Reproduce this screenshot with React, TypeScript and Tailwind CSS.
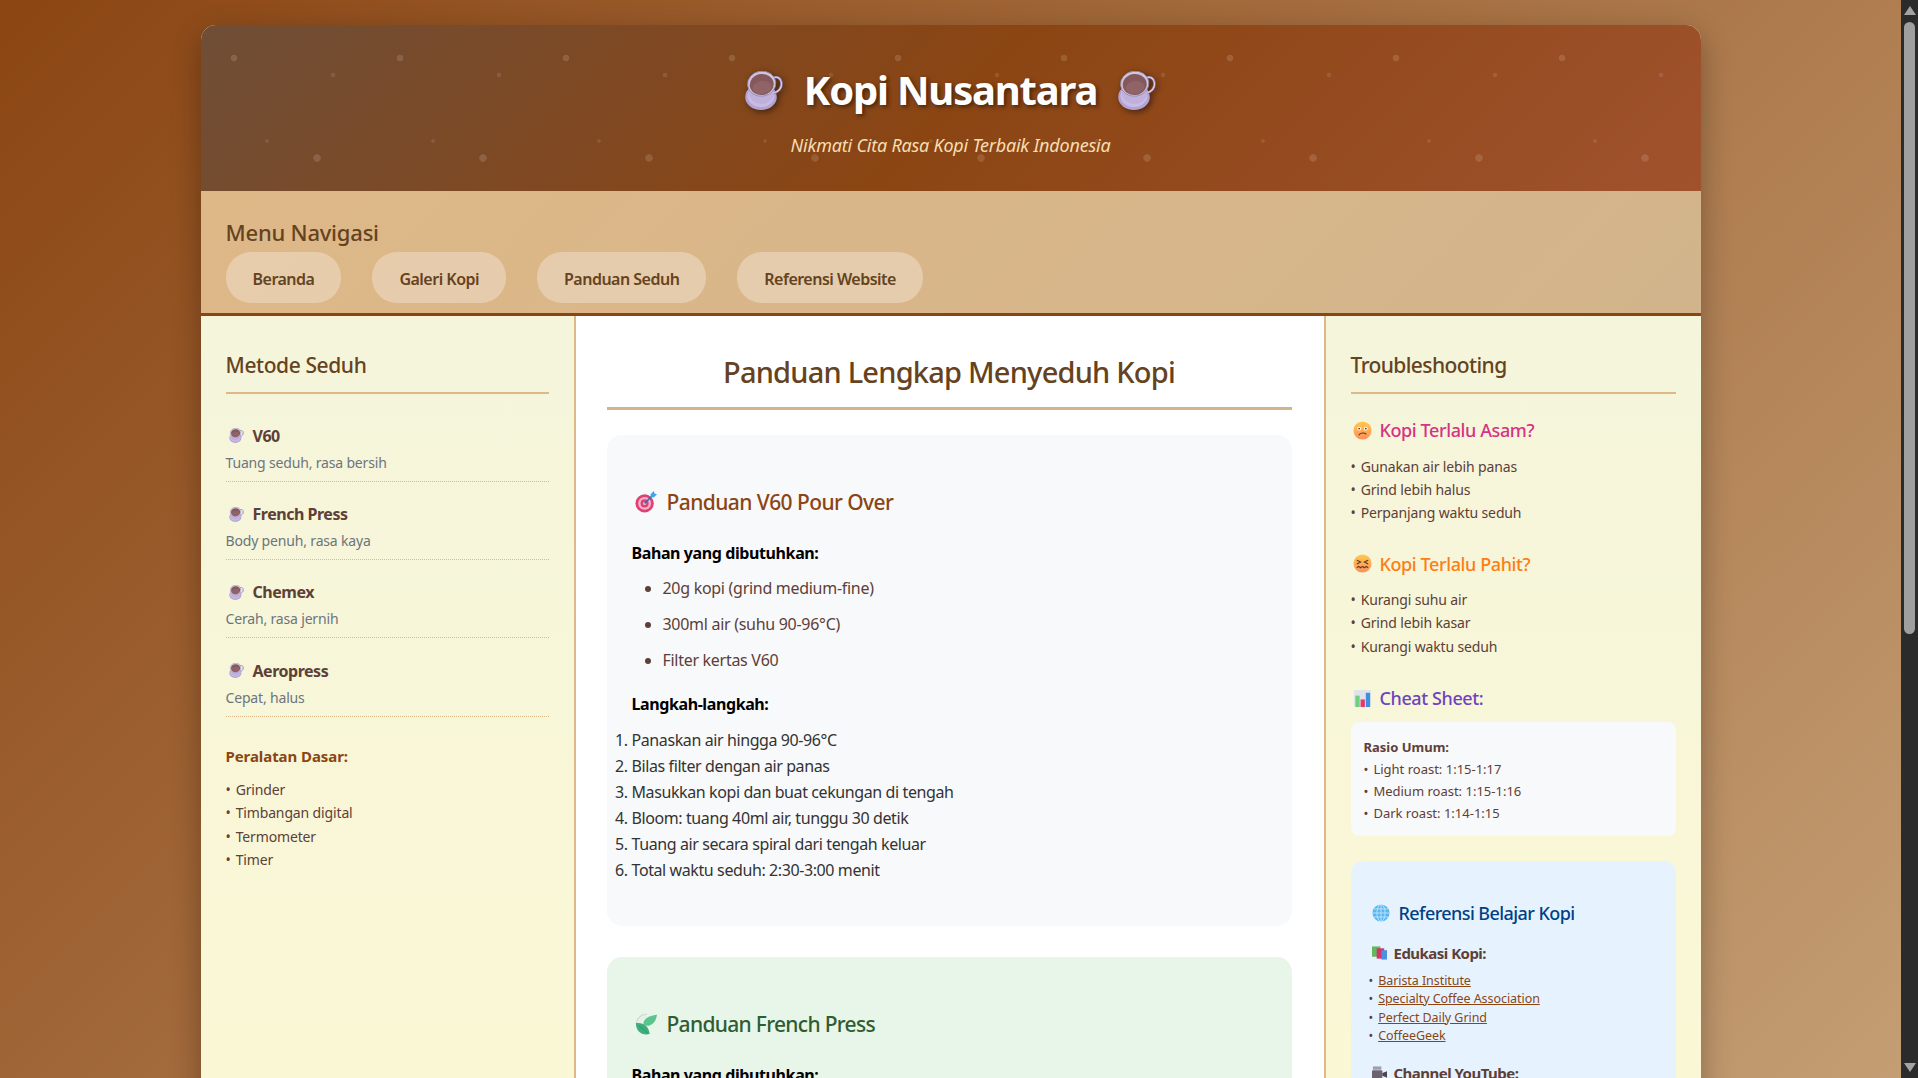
import React from 'react';

type IconProps = { className?: string };

function CupIcon({ className }: IconProps) {
  return (
    <svg viewBox="0 0 38 39" className={className}>
      <ellipse cx="16" cy="26" rx="15.800" ry="13" fill="#b3a3d2" />
      <ellipse cx="16" cy="25" rx="13.500" ry="11" fill="#c9bce4" />
      <path d="M28 7c4-2 8 0 8.500 5 .5 5-3 9-8 10" fill="none" stroke="#8878a6" strokeWidth="2.600" />
      <path d="M28 7c4-2 8 0 8.500 5 .5 5-3 9-8 10" fill="none" stroke="#ddd3ef" strokeWidth="1.200" />
      <ellipse cx="16.500" cy="20" rx="13" ry="13" fill="#bfb0dc" />
      <ellipse cx="16.700" cy="12.700" rx="14.200" ry="12.500" fill="#cfc5e3" stroke="#8f84a8" strokeWidth="0.800" transform="rotate(-8 16.700 12.700)" />
      <ellipse cx="16.700" cy="13.500" rx="12" ry="10.500" fill="#85585c" transform="rotate(-8 16.700 13.500)" />
      <ellipse cx="17" cy="16.500" rx="9.500" ry="6.500" fill="#94696c" opacity="0.7" transform="rotate(-8 17 16.500)" />
    </svg>
  );
}

function TargetIcon({ className }: IconProps) {
  return (
    <svg viewBox="0 0 24 24" className={className}>
      <circle cx="10.500" cy="13.500" r="10" fill="#e23f73" />
      <circle cx="10.500" cy="13.500" r="7" fill="#f3b6c8" />
      <circle cx="10.500" cy="13.500" r="4.400" fill="#e23f73" />
      <circle cx="10.500" cy="13.500" r="1.800" fill="#f3b6c8" />
      <path d="M10.500 13.500 19 5" stroke="#2f6fb3" strokeWidth="1.600" />
      <path d="M17 3.500 20.500 0l.8 2.800L24 3.600 20.400 7.200 17.200 6.800z" fill="#40a4ee" />
    </svg>
  );
}

function LeafIcon({ className }: IconProps) {
  return (
    <svg viewBox="0 0 24 24" className={className}>
      <path d="M1.500 11C3 5 7 1.500 13 1.500" fill="none" stroke="#d3d8d6" strokeWidth="1.500" />
      <path d="M4.500 11C6 7 9 4.500 13 4" fill="none" stroke="#e2e5e4" strokeWidth="1" />
      <path d="M9 11c1-5 6-8 15-9-1 7-5 12-11 12-2 0-3-1-4-3z" fill="#5cc48f" />
      <path d="M1 11c8-1 14 3 15 12-8 2-15-2-15-12z" fill="#3fae7d" />
      <path d="M4 14c3 2 7 5 10 8" stroke="#2a8a60" strokeWidth="0.800" fill="none" />
    </svg>
  );
}

function FaceIcon({ kind, className }: IconProps & { kind: 'sour' | 'bitter' }) {
  return (
    <svg viewBox="0 0 20 20" className={className}>
      <defs>
        <linearGradient id={`face-${kind}`} x1="0" y1="0" x2="0" y2="1">
          <stop offset="0" stopColor="#ffc94d" />
          <stop offset="1" stopColor="#ff8f5c" />
        </linearGradient>
      </defs>
      <circle cx="10" cy="10" r="9.500" fill={`url(#face-${kind})`} />
      {kind === 'sour' ? (
        <>
          <circle cx="6.500" cy="8" r="2" fill="#fff" />
          <circle cx="13.500" cy="8" r="2" fill="#fff" />
          <circle cx="6.500" cy="8" r="1" fill="#5b3a29" />
          <circle cx="13.500" cy="8" r="1" fill="#5b3a29" />
          <path d="M6 15c2-3 6-3 8-1" fill="none" stroke="#5b3a29" strokeWidth="1.200" />
        </>
      ) : (
        <>
          <path d="M4 6.500l4 2-4 2M16 6.500l-4 2 4 2" fill="none" stroke="#5b3a29" strokeWidth="1.200" />
          <path d="M4 14.500l2-1.500 2 1.500 2-1.500 2 1.500 2-1.500 2 1.500" fill="none" stroke="#5b3a29" strokeWidth="1.200" />
        </>
      )}
    </svg>
  );
}

function ChartIcon({ className }: IconProps) {
  return (
    <svg viewBox="0 0 20 20" className={className}>
      <rect x="1" y="1" width="18" height="18" rx="1.500" fill="#dfe3ea" />
      <rect x="2.500" y="7" width="4.500" height="12" fill="#6ed07c" />
      <rect x="8" y="11" width="4.500" height="8" fill="#e5386f" />
      <rect x="13.500" y="4" width="4.500" height="15" fill="#3f8fe0" />
    </svg>
  );
}

function GlobeIcon({ className }: IconProps) {
  return (
    <svg viewBox="0 0 20 20" className={className}>
      <circle cx="10" cy="10" r="9.500" fill="#58b7f0" />
      <g fill="none" stroke="#cdeafc" strokeWidth="0.900">
        <ellipse cx="10" cy="10" rx="4.500" ry="9.500" />
        <path d="M10 .5v19M.5 10h19M2 5.500h16M2 14.500h16" />
      </g>
    </svg>
  );
}

function BooksIcon({ className }: IconProps) {
  return (
    <svg viewBox="0 0 16 14" className={className}>
      <rect x="0" y="0" width="9" height="11" fill="#62b85b" />
      <rect x="5" y="2" width="8" height="11" fill="#d6336c" />
      <rect x="10" y="4" width="6" height="10" fill="#4d8fe0" />
    </svg>
  );
}

function CameraIcon({ className }: IconProps) {
  return (
    <svg viewBox="0 0 16 14" className={className}>
      <rect x="0" y="4" width="11" height="9" rx="1" fill="#6b6470" />
      <rect x="1" y="0" width="9" height="3.500" fill="#a39ca8" />
      <path d="M11 7l5-2v7l-5-2z" fill="#4b4650" />
    </svg>
  );
}

const methods = [
  { name: 'V60', note: 'Tuang seduh, rasa bersih' },
  { name: 'French Press', note: 'Body penuh, rasa kaya' },
  { name: 'Chemex', note: 'Cerah, rasa jernih' },
  { name: 'Aeropress', note: 'Cepat, halus' },
];

const navItems = ['Beranda', 'Galeri Kopi', 'Panduan Seduh', 'Referensi Website'];
const tools = ['Grinder', 'Timbangan digital', 'Termometer', 'Timer'];
const sour = ['Gunakan air lebih panas', 'Grind lebih halus', 'Perpanjang waktu seduh'];
const bitter = ['Kurangi suhu air', 'Grind lebih kasar', 'Kurangi waktu seduh'];
const ratios = ['Light roast: 1:15-1:17', 'Medium roast: 1:15-1:16', 'Dark roast: 1:14-1:15'];
const eduLinks = ['Barista Institute', 'Specialty Coffee Association', 'Perfect Daily Grind', 'CoffeeGeek'];
const youtube = ['James Hoffmann', 'European Coffee Trip', 'Lance Hedrick'];

const v60 = {
  items: ['20g kopi (grind medium-fine)', '300ml air (suhu 90-96°C)', 'Filter kertas V60'],
  steps: [
    'Panaskan air hingga 90-96°C',
    'Bilas filter dengan air panas',
    'Masukkan kopi dan buat cekungan di tengah',
    'Bloom: tuang 40ml air, tunggu 30 detik',
    'Tuang air secara spiral dari tengah keluar',
    'Total waktu seduh: 2:30-3:00 menit',
  ],
};

const frenchPress = {
  items: ['30g kopi (grind kasar)', '500ml air (suhu 93-96°C)', 'French press'],
  steps: [
    'Panaskan french press dengan air panas',
    'Masukkan kopi ke dalam french press',
    'Tuang air dan aduk perlahan',
    'Tutup dan diamkan selama 4 menit',
    'Tekan plunger perlahan, lalu sajikan',
  ],
};

function GuideBody({ guide }: { guide: typeof v60 }) {
  return (
    <>
      <h4 className="mt-6 text-[16px] leading-6 font-bold text-black">Bahan yang dibutuhkan:</h4>
      <ul className="mt-[11px] list-disc pl-[31px] text-[16px] leading-6 tracking-[-0.018em] text-[#5d4037]">
        {guide.items.map((item) => (
          <li key={item} className="mb-3">{item}</li>
        ))}
      </ul>
      <h4 className="mt-5 text-[16px] leading-6 font-bold text-black">Langkah-langkah:</h4>
      <ol className="mt-[11px] list-decimal text-[16px] leading-[26px] text-[#333]">
        {guide.steps.map((step) => (
          <li key={step}>{step}</li>
        ))}
      </ol>
    </>
  );
}

function Bullets({ items }: { items: string[] }) {
  return (
    <ul className="mt-[11.5px] text-[14px] leading-[23.2px] tracking-[-0.01em] text-[#5d4037]">
      {items.map((item) => (
        <li key={item}>•<span className="ml-[5px]">{item}</span></li>
      ))}
    </ul>
  );
}

function Scrollbar() {
  return (
    <aside className="w-[17px] h-full shrink-0 bg-[#2b2b2b] flex flex-col items-center">
      <div className="mt-[6px] w-0 h-0 border-x-[6px] border-x-transparent border-b-[9px] border-b-[#a3a3a3]" />
      <div className="mt-[7px] w-[11px] h-[612px] rounded-full bg-[#9f9f9f]" />
      <div className="mt-auto mb-[6px] w-0 h-0 border-x-[6px] border-x-transparent border-t-[9px] border-t-[#a3a3a3]" />
    </aside>
  );
}

export default function App() {
  return (
    <div className="flex h-screen overflow-hidden font-['Noto_Sans',sans-serif] tracking-[-0.025em]">
      <div className="flex-1 min-w-0 overflow-hidden">
        <div className="min-h-[1838px] py-[25px] bg-[linear-gradient(135deg,#8b4513,#d2b48c)]">
          <div className="w-[1500px] mx-auto rounded-[15px] overflow-hidden shadow-[0_10px_30px_rgba(0,0,0,0.3)] bg-white min-h-[1788px] flex flex-col">
            {/* Header */}
            <header className="relative h-[166px] pt-[38px] text-center bg-[linear-gradient(135deg,#6f4e37,#8b4513,#a0522d)]">
              <div className="absolute inset-0 bg-[length:166px_166px] bg-[radial-gradient(circle_at_33px_33px,rgba(255,255,255,0.13)_3px,transparent_3.6px),radial-gradient(circle_at_132px_50px,rgba(255,255,255,0.1)_2px,transparent_2.6px),radial-gradient(circle_at_66px_116px,rgba(255,255,255,0.1)_1.5px,transparent_2px),radial-gradient(circle_at_116px_133px,rgba(255,255,255,0.13)_3.4px,transparent_4px)]" />
              <h1 className="relative flex items-center justify-center gap-[21px] text-[40px] leading-[54px] font-bold tracking-[-0.03em] text-white [text-shadow:2px_2px_4px_rgba(0,0,0,0.5)]">
                <CupIcon className="w-[38px] h-[39px] drop-shadow-[2px_2px_3px_rgba(0,0,0,0.5)]" />
                Kopi Nusantara
                <CupIcon className="w-[38px] h-[39px] drop-shadow-[2px_2px_3px_rgba(0,0,0,0.5)]" />
              </h1>
              <p className="relative mt-4 text-[18px] leading-6 italic tracking-[-0.012em] text-[#f5deb3]">Nikmati Cita Rasa Kopi Terbaik Indonesia</p>
            </header>

            {/* Navigasi */}
            <nav className="pt-[25px] pb-[10px] px-[25px] border-b-[3px] border-[#8b4513] bg-[linear-gradient(135deg,#deb887,#d2b48c)]">
              <h3 className="text-[22px] leading-8 font-medium tracking-[-0.01em] text-[#654321]">Menu Navigasi</h3>
              <div className="mt-1 flex gap-[31px]">
                {navItems.map((item) => (
                  <a key={item} className="px-[27px] pt-4 pb-3 rounded-[25px] bg-white/30 text-[16px] leading-[23px] font-semibold tracking-[-0.032em] text-[#654321]">
                    {item}
                  </a>
                ))}
              </div>
            </nav>

            <div className="flex-1 grid grid-cols-[375px_748px_377px]">
              {/* Sidebar kiri */}
              <aside className="px-[25px] pt-[35px] pb-[25px] border-r-2 border-[#deb887] bg-[linear-gradient(180deg,#f5f5dc,#fffacd)]">
                <h3 className="pb-[13px] mb-[9.5px] border-b-2 border-[#deb887] text-[21px] leading-7 font-medium text-[#654321]">Metode Seduh</h3>
                {methods.map((method) => (
                  <div key={method.name} className="pt-[20.3px] pb-2 border-b border-dotted border-[#deb887]">
                    <div className="flex items-center gap-[9px] pl-[3px] text-[16px] leading-6 font-bold tracking-[-0.03em] text-[#5d4037]">
                      <CupIcon className="w-[15px] h-[15px]" />
                      {method.name}
                    </div>
                    <p className="mt-[5px] text-[14px] leading-5 tracking-[-0.012em] text-[#6c757d]">{method.note}</p>
                  </div>
                ))}
                <h4 className="mt-7 text-[15px] leading-[22px] font-bold tracking-[-0.005em] text-[#8b4513]">Peralatan Dasar:</h4>
                <ul className="mt-[11px] text-[14px] leading-[23.4px] tracking-[-0.01em] text-[#5d4037]">
                  {tools.map((tool) => (
                    <li key={tool}>•<span className="ml-[5px]">{tool}</span></li>
                  ))}
                </ul>
              </aside>

              {/* Konten utama */}
              <main className="pt-9 pl-[31px] pr-8 pb-8">
                <h2 className="pb-[15px] mb-[25px] border-b-[3px] border-[#d2b48c] text-center text-[29px] leading-10 font-medium tracking-[-0.027em] text-[#654321]">
                  Panduan Lengkap Menyeduh Kopi
                </h2>

                <section className="rounded-[15px] bg-[#f8f9fa] pt-[52px] px-[25px] pb-[43px] mb-[31px]">
                  <h3 className="flex items-center gap-[10px] pl-[3px] text-[21px] leading-[30px] font-medium tracking-[-0.027em] text-[#8b4513]">
                    <TargetIcon className="w-[22px] h-[22px]" />
                    Panduan V60 Pour Over
                  </h3>
                  <GuideBody guide={v60} />
                </section>

                <section className="rounded-[15px] bg-[#e8f5e9] pt-[52px] px-[25px] pb-[43px]">
                  <h3 className="flex items-center gap-[10px] pl-[3px] text-[21px] leading-[30px] font-medium tracking-[-0.033em] text-[#2e5d32]">
                    <LeafIcon className="w-[22px] h-[22px]" />
                    Panduan French Press
                  </h3>
                  <GuideBody guide={frenchPress} />
                </section>
              </main>

              {/* Sidebar kanan */}
              <aside className="border-l-2 border-[#deb887] px-[25px] pt-[35px] pb-[25px] bg-[linear-gradient(180deg,#f5f5dc,#fffacd)]">
                <h3 className="pb-[13px] border-b-2 border-[#deb887] text-[21px] leading-7 font-medium tracking-[-0.028em] text-[#654321]">Troubleshooting</h3>

                <h4 className="mt-[23px] flex items-center gap-2 pl-[2px] text-[18px] leading-[26px] font-medium text-[#d63384]">
                  <FaceIcon kind="sour" className="w-[19px] h-[19px]" />
                  Kopi Terlalu Asam?
                </h4>
                <Bullets items={sour} />

                <h4 className="mt-[26.5px] flex items-center gap-2 pl-[2px] text-[18px] leading-[26px] font-medium text-[#fd7e14]">
                  <FaceIcon kind="bitter" className="w-[19px] h-[19px]" />
                  Kopi Terlalu Pahit?
                </h4>
                <Bullets items={bitter} />

                <h4 className="mt-[27.5px] flex items-center gap-2 pl-[2px] text-[18px] leading-[26px] font-medium text-[#6f42c1]">
                  <ChartIcon className="w-[19px] h-[19px]" />
                  Cheat Sheet:
                </h4>
                <div className="mt-[10.5px] rounded-[8px] bg-[#f8f9fa] px-[13px] pt-[14px] pb-3 text-[13px] leading-[22px] tracking-normal text-[#5d4037]">
                  <p className="font-bold">Rasio Umum:</p>
                  {ratios.map((ratio) => (
                    <p key={ratio}>•<span className="ml-[5px]">{ratio}</span></p>
                  ))}
                </div>

                <div className="mt-[25px] rounded-[12px] bg-[#e6f3ff] pt-[39px] px-[18px] pb-6">
                  <h4 className="flex items-center gap-[9px] pl-[3px] text-[18px] leading-[26px] font-medium tracking-[-0.032em] text-[#004085]">
                    <GlobeIcon className="w-[18px] h-[18px]" />
                    Referensi Belajar Kopi
                  </h4>
                  <h5 className="mt-4 flex items-center gap-[7px] pl-[3px] text-[15px] leading-[22px] font-bold tracking-[-0.035em] text-[#5d4037]">
                    <BooksIcon className="w-[15px] h-[14px]" />
                    Edukasi Kopi:
                  </h5>
                  <ul className="mt-2 text-[12.5px] leading-[18.4px] tracking-[-0.005em] text-[#5d4037]">
                    {eduLinks.map((link) => (
                      <li key={link}>•<a className="ml-[5px] underline text-[#8b4513]">{link}</a></li>
                    ))}
                  </ul>
                  <h5 className="mt-[17px] flex items-center gap-[7px] pl-[3px] text-[15px] leading-[22px] font-bold tracking-[-0.035em] text-[#5d4037]">
                    <CameraIcon className="w-[15px] h-[14px]" />
                    Channel YouTube:
                  </h5>
                  <ul className="mt-2 text-[12.5px] leading-[18.4px] tracking-[-0.005em] text-[#5d4037]">
                    {youtube.map((link) => (
                      <li key={link}>•<a className="ml-[5px] underline text-[#8b4513]">{link}</a></li>
                    ))}
                  </ul>
                </div>
              </aside>
            </div>
          </div>
        </div>
      </div>
      <Scrollbar />
    </div>
  );
}
